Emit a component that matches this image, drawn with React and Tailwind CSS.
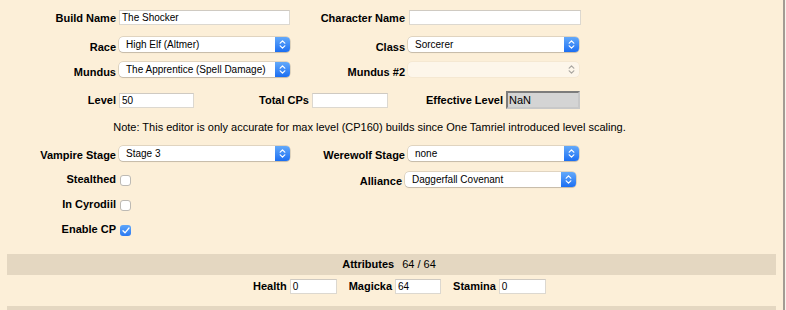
import React from "react";

const Label = ({ children, w = "w-[116px]", shift = false }) => (
    <div
        className={`${w} shrink-0 text-right text-[11px] font-bold leading-[14px] text-black ${
            shift ? "translate-y-[2px]" : ""
        }`}
    >
        {children}
    </div>
);

const TextInput = ({ value, w = "w-[171px]", ml = "ml-[3px]" }) => (
    <div
        className={`${w} ${ml} h-[15px] shrink-0 bg-white border border-[#dcd8d0] border-t-[#cfcac2] pl-[2px] text-[10px] leading-[13px] text-black`}
    >
        {value}
    </div>
);

const Chevrons = ({ color }) => (
    <svg width="7" height="11" viewBox="0 0 7 11" fill="none">
        <path d="M1.2 4.2 L3.5 1.8 L5.8 4.2" stroke={color} strokeWidth="1.2" strokeLinecap="round" strokeLinejoin="round" />
        <path d="M1.2 6.8 L3.5 9.2 L5.8 6.8" stroke={color} strokeWidth="1.2" strokeLinecap="round" strokeLinejoin="round" />
    </svg>
);

const Select = ({ value, disabled = false, ml = "ml-[3px]" }) => (
    <div
        className={`${ml} w-[171px] h-[15px] shrink-0 flex rounded-[4px] ${
            disabled
                ? "bg-[#fdf6ea] shadow-[0_0_0_0.5px_rgba(0,0,0,0.06)]"
                : "bg-white shadow-[0_0_0_0.5px_rgba(0,0,0,0.22),0_1px_1px_rgba(0,0,0,0.12)]"
        }`}
    >
        <div className="flex-1 pl-[7px] text-[10px] leading-[15px] text-black truncate">{value}</div>
        <div
            className={`w-[15px] h-full flex items-center justify-center rounded-r-[4px] ${
                disabled ? "" : "bg-gradient-to-b from-[#63a9fa] to-[#1a6ef2]"
            }`}
        >
            <Chevrons color={disabled ? "#a9a6a0" : "#ffffff"} />
        </div>
    </div>
);

const Checkbox = ({ checked }) =>
    checked ? (
        <div className="ml-[4px] mt-[2px] w-[11px] h-[11px] shrink-0 rounded-[3px] bg-gradient-to-b from-[#5ea6f9] to-[#2a78f1] flex items-center justify-center">
            <svg width="8" height="7" viewBox="0 0 8 7" fill="none">
                <path d="M1 3.8 L3 5.8 L7 1" stroke="#fff" strokeWidth="1.3" strokeLinecap="round" strokeLinejoin="round" />
            </svg>
        </div>
    ) : (
        <div className="ml-[4px] mt-[2px] w-[11px] h-[11px] shrink-0 rounded-[3px] bg-white border border-[#bdbab4]" />
    );

const App = () => {
    return (
        <div className="w-[786px] h-[310px] overflow-hidden bg-[#f7f3ec] font-['Liberation_Sans',Arial,sans-serif]">
            <div className="w-[785px] h-full bg-[#fcefd8] border-r-2 border-[#a39c93] flex flex-col pt-[10px]">
                {/* Name */}
                <div className="flex items-center h-[15px]">
                    <Label>Build Name</Label>
                    <TextInput value="The Shocker" />
                    <Label w="w-[115px]">Character Name</Label>
                    <TextInput value="" w="w-[172px]" ml="ml-[4px]" />
                </div>

                <div className="flex items-center h-[15px] mt-[12px]">
                    <Label shift>Race</Label>
                    <Select value="High Elf (Altmer)" />
                    <Label w="w-[115px]" shift>Class</Label>
                    <Select value="Sorcerer" />
                </div>

                <div className="flex items-center h-[15px] mt-[10px]">
                    <Label shift>Mundus</Label>
                    <Select value="The Apprentice (Spell Damage)" />
                    <Label w="w-[115px]" shift>Mundus #2</Label>
                    <Select value="" disabled />
                </div>

                {/* Level */}
                <div className="flex items-center h-[18px] mt-[14px]">
                    <Label>Level</Label>
                    <TextInput value="50" w="w-[75px]" />
                    <Label w="w-[115px]">Total CPs</Label>
                    <TextInput value="" w="w-[76px]" />
                    <Label w="w-[115px]">Effective Level</Label>
                    <div className="ml-[3px] w-[74px] h-[18px] shrink-0 bg-[#d4d4d4] border-2 border-[#7c7c7c] border-r-[#c8c8c8] border-b-[#c8c8c8] pl-[1px] text-[11px] leading-[14px] text-black">
                        NaN
                    </div>
                </div>

                <div className="mt-[11px] h-[14px] text-center text-[11px] leading-[14px] text-black pr-[44px]">
                    Note: This editor is only accurate for max level (CP160) builds since One Tamriel introduced level scaling.
                </div>

                {/* Flags */}
                <div className="flex items-center h-[14px] mt-[12px]">
                    <Label shift>Vampire Stage</Label>
                    <Select value="Stage 3" />
                    <Label w="w-[115px]" shift>Werewolf Stage</Label>
                    <Select value="none" />
                </div>

                <div className="flex items-center h-[14px] mt-[12px]">
                    <Label>Stealthed</Label>
                    <Checkbox checked={false} />
                    <div className="w-[159px] shrink-0" />
                    <Label w="w-[112px]" shift>Alliance</Label>
                    <Select value="Daggerfall Covenant" />
                </div>

                <div className="flex items-center h-[14px] mt-[11px]">
                    <Label>In Cyrodiil</Label>
                    <Checkbox checked={false} />
                </div>

                <div className="flex items-center h-[14px] mt-[11px]">
                    <Label>Enable CP</Label>
                    <Checkbox checked />
                </div>

                {/* Attributes */}
                <div className="mx-[7px] mt-[18px] h-[21px] shrink-0 bg-[#e4d7c1] flex items-center justify-center text-[11px] text-black pr-[5px]">
                    <span className="font-bold">Attributes</span>
                    <span className="ml-[8px]">64 / 64</span>
                </div>

                <div className="flex items-center h-[14px] mt-[4px] pl-[253px]">
                    <span className="text-[11px] font-bold leading-[14px]">Health</span>
                    <TextInput value="0" w="w-[47px]" />
                    <span className="ml-[12px] text-[11px] font-bold leading-[14px]">Magicka</span>
                    <TextInput value="64" w="w-[46px]" />
                    <span className="ml-[12px] text-[11px] font-bold leading-[14px]">Stamina</span>
                    <TextInput value="0" w="w-[47px]" />
                </div>

                <div className="mx-[7px] mt-[13px] h-[21px] shrink-0 bg-[#e4d7c1]" />
            </div>
        </div>
    );
};

export default App;
